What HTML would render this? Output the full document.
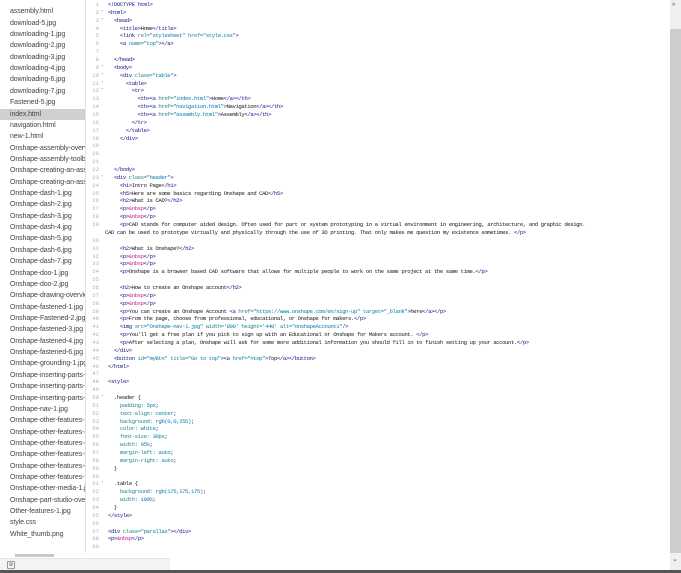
<!DOCTYPE html>
<html><head><style>
html,body{margin:0;width:681px;height:573px;overflow:hidden}
body{background:#fff;position:relative;font-family:"Liberation Sans",sans-serif}
#side{position:absolute;left:0;top:0;width:85px;height:553px;border-right:1px solid #e2e2e2;overflow:hidden}
#list{position:absolute;top:6.3px;left:0;width:85px}
#list div{height:11.37px;line-height:11.37px;font-size:7px;color:#444;padding-left:10px;white-space:nowrap;letter-spacing:-0.1px}
#list div.sel{background:#d0d0d0}
#hs{position:absolute;left:15px;top:554px;width:39px;height:3px;background:#c8c8c8}
#bot{position:absolute;left:0;top:558px;width:170px;height:12px;background:#f3f3f3;border-top:1px solid #e6e6e6}
#ico{position:absolute;left:7px;top:561px;width:6px;height:6px;border:1px solid #999;border-radius:1px;font-size:5px;line-height:6px;text-align:center;color:#555}
#dark{position:absolute;left:0;top:570px;width:681px;height:3px;background:#555}
#gut{position:absolute;left:86px;top:1px;width:20px;font-family:"Liberation Mono",monospace;font-size:5.6px;color:#b0b0b0}
#gut div{height:7.87px;line-height:7.87px;position:relative;text-align:right;width:13px}
#gut div i{position:absolute;left:15px;font-style:normal;font-size:4px;color:#aaa}
#code{position:absolute;left:108px;top:1px;width:560px;font-family:"Liberation Mono",monospace;font-size:5.7px;letter-spacing:-0.45px;color:#222}
#code div{height:7.87px;line-height:7.87px;white-space:pre}
.t{color:#1a1a8c}.a{color:#2a8a8a}.s{color:#1080b0}.e{color:#c030a0}.n{color:#1080b0}
#vs{position:absolute;left:670px;top:0;width:11px;height:570px;background:#f0f0f0}
#th{position:absolute;left:670px;top:29px;width:11px;height:524px;background:#cdcdcd}
.ar{position:absolute;left:672px;font-size:7px;color:#555}
</style></head><body>
<div id="side"><div id="list">
<div>assembly.html</div><div>download-5.jpg</div><div>downloading-1.jpg</div><div>downloading-2.jpg</div><div>downloading-3.jpg</div><div>downloading-4.jpg</div><div>downloading-6.jpg</div><div>downloading-7.jpg</div><div>Fastened-5.jpg</div><div class="sel">index.html</div><div>navigation.html</div><div>new-1.html</div><div>Onshape-assembly-overv</div><div>Onshape-assembly-toolba</div><div>Onshape-creating-an-asse</div><div>Onshape-creating-an-asse</div><div>Onshape-dash-1.jpg</div><div>Onshape-dash-2.jpg</div><div>Onshape-dash-3.jpg</div><div>Onshape-dash-4.jpg</div><div>Onshape-dash-5.jpg</div><div>Onshape-dash-6.jpg</div><div>Onshape-dash-7.jpg</div><div>Onshape-doo-1.jpg</div><div>Onshape-doo-2.jpg</div><div>Onshape-drawing-overview</div><div>Onshape-fastened-1.jpg</div><div>Onshape-Fastened-2.jpg</div><div>Onshape-fastened-3.jpg</div><div>Onshape-fastened-4.jpg</div><div>Onshape-fastened-6.jpg</div><div>Onshape-grounding-1.jpg</div><div>Onshape-inserting-parts-1.</div><div>Onshape-inserting-parts-2.</div><div>Onshape-inserting-parts-3.</div><div>Onshape-nav-1.jpg</div><div>Onshape-other-features-2.</div><div>Onshape-other-features-3.</div><div>Onshape-other-features-4.</div><div>Onshape-other-features-5.</div><div>Onshape-other-features-6.</div><div>Onshape-other-features-7.</div><div>Onshape-other-media-1.jpg</div><div>Onshape-part-studio-overv</div><div>Other-features-1.jpg</div><div>style.css</div><div>White_thumb.png</div>
</div></div>
<div id="hs"></div>
<div id="bot"></div><div id="ico">⚙</div>
<div id="gut">
<div>1</div><div>2<i>▾</i></div><div>3<i>▾</i></div><div>4</div><div>5</div><div>6</div><div>7</div><div>8</div><div>9<i>▾</i></div><div>10<i>▾</i></div><div>11<i>▾</i></div><div>12<i>▾</i></div><div>13</div><div>14</div><div>15</div><div>16</div><div>17</div><div>18</div><div>19</div><div>20</div><div>21</div><div>22</div><div>23<i>▾</i></div><div>24</div><div>25</div><div>26</div><div>27</div><div>28</div><div>29</div><div></div><div>30</div><div>31</div><div>32</div><div>33</div><div>34</div><div>35</div><div>36</div><div>37</div><div>38</div><div>39</div><div>40</div><div>41</div><div>42</div><div>43</div><div>44</div><div>45</div><div>46</div><div>47</div><div>48</div><div>49</div><div>50<i>▾</i></div><div>51</div><div>52</div><div>53</div><div>54</div><div>55</div><div>56</div><div>57</div><div>58</div><div>59</div><div>60</div><div>61<i>▾</i></div><div>62</div><div>63</div><div>64</div><div>65</div><div>66</div><div>67</div><div>68</div><div>69</div>
</div>
<div id="code"><div><span class="t">&lt;!DOCTYPE html&gt;</span></div><div><span class="t">&lt;html&gt;</span></div><div>  <span class="t">&lt;head&gt;</span></div><div>    <span class="t">&lt;title&gt;</span>Home<span class="t">&lt;/title&gt;</span></div><div>    <span class="t">&lt;link</span> <span class="a">rel=</span><span class="s">"stylesheet"</span> <span class="a">href=</span><span class="s">"style.css"</span><span class="t">&gt;</span></div><div>    <span class="t">&lt;a</span> <span class="a">name=</span><span class="s">"top"</span><span class="t">&gt;&lt;/a&gt;</span></div><div> </div><div>  <span class="t">&lt;/head&gt;</span></div><div>  <span class="t">&lt;body&gt;</span></div><div>    <span class="t">&lt;div</span> <span class="a">class=</span><span class="s">"table"</span><span class="t">&gt;</span></div><div>      <span class="t">&lt;table&gt;</span></div><div>        <span class="t">&lt;tr&gt;</span></div><div>          <span class="t">&lt;th&gt;&lt;a</span> <span class="a">href=</span><span class="s">"index.html"</span><span class="t">&gt;</span>Home<span class="t">&lt;/a&gt;&lt;/th&gt;</span></div><div>          <span class="t">&lt;th&gt;&lt;a</span> <span class="a">href=</span><span class="s">"navigation.html"</span><span class="t">&gt;</span>Navigation<span class="t">&lt;/a&gt;&lt;/th&gt;</span></div><div>          <span class="t">&lt;th&gt;&lt;a</span> <span class="a">href=</span><span class="s">"assembly.html"</span><span class="t">&gt;</span>Assembly<span class="t">&lt;/a&gt;&lt;/th&gt;</span></div><div>        <span class="t">&lt;/tr&gt;</span></div><div>      <span class="t">&lt;/table&gt;</span></div><div>    <span class="t">&lt;/div&gt;</span></div><div> </div><div> </div><div> </div><div>  <span class="t">&lt;/body&gt;</span></div><div>  <span class="t">&lt;div</span> <span class="a">class=</span><span class="s">"header"</span><span class="t">&gt;</span></div><div>    <span class="t">&lt;h1&gt;</span>Intro Page<span class="t">&lt;/h1&gt;</span></div><div>    <span class="t">&lt;h5&gt;</span>Here are some basics regarding Onshape and CAD<span class="t">&lt;/h5&gt;</span></div><div>    <span class="t">&lt;h2&gt;</span>What is CAD?<span class="t">&lt;/h2&gt;</span></div><div>    <span class="t">&lt;p&gt;</span><span class="e">&amp;nbsp</span><span class="t">&lt;/p&gt;</span></div><div>    <span class="t">&lt;p&gt;</span><span class="e">&amp;nbsp</span><span class="t">&lt;/p&gt;</span></div><div>    <span class="t">&lt;p&gt;</span>CAD stands for computer aided design. Often used for part or system prototyping in a virtual environment in engineering, architecture, and graphic design.</div><div style="margin-left:-3px">CAD can be used to prototype virtually and physically through the use of 3D printing. That only makes me question my existence sometimes. <span class="t">&lt;/p&gt;</span></div><div> </div><div>    <span class="t">&lt;h2&gt;</span>What is Onshape?<span class="t">&lt;/h2&gt;</span></div><div>    <span class="t">&lt;p&gt;</span><span class="e">&amp;nbsp</span><span class="t">&lt;/p&gt;</span></div><div>    <span class="t">&lt;p&gt;</span><span class="e">&amp;nbsp</span><span class="t">&lt;/p&gt;</span></div><div>    <span class="t">&lt;p&gt;</span>Onshape is a browser based CAD software that allows for multiple people to work on the same project at the same time.<span class="t">&lt;/p&gt;</span></div><div> </div><div>    <span class="t">&lt;h2&gt;</span>How to create an Onshape account<span class="t">&lt;/h2&gt;</span></div><div>    <span class="t">&lt;p&gt;</span><span class="e">&amp;nbsp</span><span class="t">&lt;/p&gt;</span></div><div>    <span class="t">&lt;p&gt;</span><span class="e">&amp;nbsp</span><span class="t">&lt;/p&gt;</span></div><div>    <span class="t">&lt;p&gt;</span>You can create an Onshape Account <span class="t">&lt;a</span> <span class="a">href=</span><span class="s">"https://www.onshape.com/en/sign-up"</span> <span class="a">target=</span><span class="s">"_blank"</span><span class="t">&gt;</span>here<span class="t">&lt;/a&gt;&lt;/p&gt;</span></div><div>    <span class="t">&lt;p&gt;</span>From the page, choose from professional, educational, or Onshape for makers.<span class="t">&lt;/p&gt;</span></div><div>    <span class="t">&lt;img</span> <span class="a">src=</span><span class="s">"Onshape-nav-1.jpg"</span> <span class="a">width=</span><span class="s">'800'</span> <span class="a">height=</span><span class="s">'440'</span> <span class="a">alt=</span><span class="s">"onshapeAccount1"</span><span class="t">/&gt;</span></div><div>    <span class="t">&lt;p&gt;</span>You'll get a free plan if you pick to sign up with an Educational or Onshape for Makers account. <span class="t">&lt;/p&gt;</span></div><div>    <span class="t">&lt;p&gt;</span>After selecting a plan, Onshape will ask for some more additional information you should fill in to finish setting up your account.<span class="t">&lt;/p&gt;</span></div><div>  <span class="t">&lt;/div&gt;</span></div><div>  <span class="t">&lt;button</span> <span class="a">id=</span><span class="s">"myBtn"</span> <span class="a">title=</span><span class="s">"Go to top"</span><span class="t">&gt;&lt;a</span> <span class="a">href=</span><span class="s">"#top"</span><span class="t">&gt;</span>Top<span class="t">&lt;/a&gt;&lt;/button&gt;</span></div><div><span class="t">&lt;/html&gt;</span></div><div> </div><div><span class="t">&lt;style&gt;</span></div><div> </div><div>  .header {</div><div>    <span class="a">padding:</span> <span class="n">5px</span>;</div><div>    <span class="a">text-align:</span> <span class="n">center</span>;</div><div>    <span class="a">background:</span> <span class="n">rgb(0,0,255)</span>;</div><div>    <span class="a">color:</span> <span class="n">white</span>;</div><div>    <span class="a">font-size:</span> <span class="n">30px</span>;</div><div>    <span class="a">width:</span> <span class="n">95%</span>;</div><div>    <span class="a">margin-left:</span> <span class="n">auto</span>;</div><div>    <span class="a">margin-right:</span> <span class="n">auto</span>;</div><div>  }</div><div> </div><div>  .table {</div><div>    <span class="a">background:</span> <span class="n">rgb(175,175,175)</span>;</div><div>    <span class="a">width:</span> <span class="n">100%</span>;</div><div>  }</div><div><span class="t">&lt;/style&gt;</span></div><div> </div><div><span class="t">&lt;div</span> <span class="a">class=</span><span class="s">"parallax"</span><span class="t">&gt;&lt;/div&gt;</span></div><div><span class="t">&lt;p&gt;</span><span class="e">&amp;nbsp</span><span class="t">&lt;/p&gt;</span></div><div> </div></div>
<div id="vs"></div><div id="th"></div>
<div class="ar" style="top:3px">^</div>
<div class="ar" style="top:555px">⌄</div>
<div id="dark"></div>
</body></html>
